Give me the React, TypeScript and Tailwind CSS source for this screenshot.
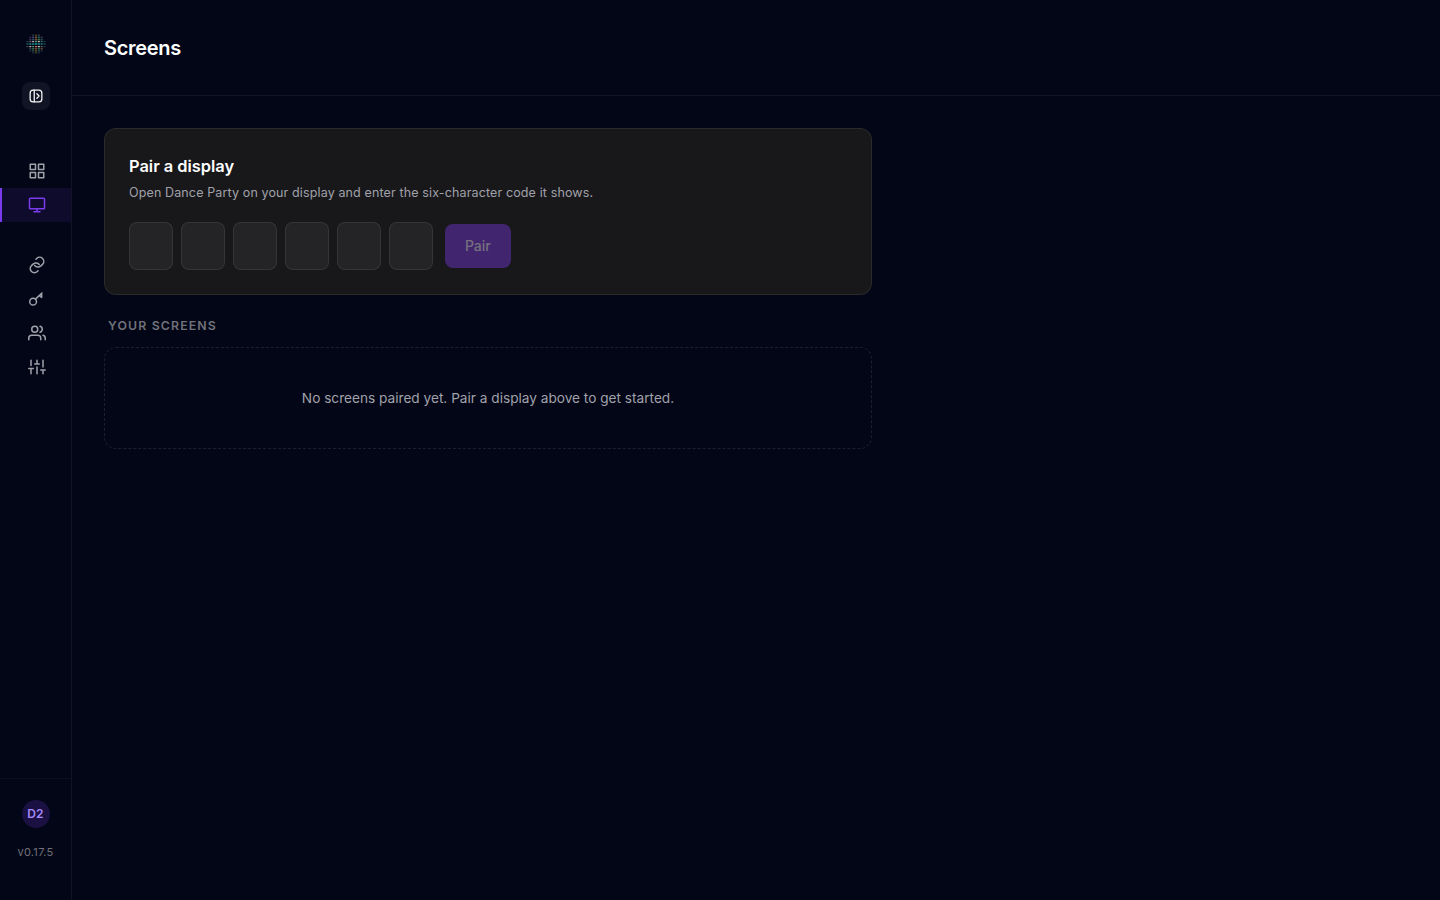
import type { ReactNode } from "react";

const LOGO_ROWS = [
  { y: 0.4, h: 1.6, colors: ["", "", "#20303c", "#4c3c20", "#283c40", "", ""] },
  { y: 2.6, h: 1.6, colors: ["", "#2c2648", "#403c64", "#6a5a2c", "#1d5a50", "#30343c", ""] },
  { y: 4.8, h: 1.6, colors: ["", "#402c54", "#284c68", "#7a4c2c", "#3c6a44", "#28484c", ""] },
  { y: 7, h: 1.2, colors: ["#1e4650", "#5a5a50", "#b0a09c", "#46a090", "#c0b0a4", "#2a6a64", "#1a3a44"] },
  { y: 9, h: 2, colors: ["#12444c", "#146468", "#166878", "#1a7874", "#167078", "#145a5c", "#12343e"] },
  { y: 12, h: 1.2, colors: ["#3a4448", "#b8a8a0", "#50886a", "#c07060", "#d0c4b8", "#6a6048", "#1c3038"] },
  { y: 14, h: 1.6, colors: ["", "#2e4044", "#3a6a48", "#7a4a30", "#286858", "#5a4a38", ""] },
  { y: 16.2, h: 1.4, colors: ["", "#242c3c", "#2c544c", "#6a5a30", "#24505a", "#2a3038", ""] },
  { y: 18.2, h: 1.2, colors: ["", "", "#222c38", "#3c4a2a", "#20343c", "", ""] },
];

function Logo() {
  return (
    <svg width="20" height="20" viewBox="0 0 20 20" aria-hidden="true">
      {LOGO_ROWS.map((row) =>
        row.colors.map((color, i) =>
          color ? <rect key={`${row.y}-${i}`} x={i * 2.85 + 0.3} y={row.y} width="2.3" height={row.h} rx="0.4" fill={color} /> : null,
        ),
      )}
    </svg>
  );
}

function Icon({ children, size = 18, stroke = 2 }: { children: ReactNode; size?: number; stroke?: number }) {
  return (
    <svg width={size} height={size} viewBox="0 0 24 24" fill="none" stroke="currentColor" strokeWidth={stroke} strokeLinecap="round" strokeLinejoin="round" aria-hidden="true">
      {children}
    </svg>
  );
}

function NavItem({ active = false, children }: { active?: boolean; children: ReactNode }) {
  return (
    <a
      className={
        active
          ? "flex h-[34px] items-center justify-center border-l-2 border-[#7c3aed] bg-[#7c3aed]/10 text-[#7c3aed]"
          : "flex h-[34px] items-center justify-center border-l-2 border-transparent text-[#a1a1aa]"
      }
    >
      {children}
    </a>
  );
}

function Sidebar() {
  return (
    <aside className="flex w-[72px] shrink-0 flex-col border-r border-white/[0.06]">
      <div className="flex flex-col items-center pt-[34px]">
        <Logo />
        <button className="mt-7 flex size-7 items-center justify-center rounded-lg bg-white/[0.06] text-[#f4f4f5]">
          <Icon size={14} stroke={2.2}>
            <rect x="2" y="2" width="20" height="20" rx="5" />
            <path d="M9 2v20" />
            <path d="M13.5 8.2l3.8 3.8-3.8 3.8" />
          </Icon>
        </button>
      </div>
      <nav className="mt-11 flex flex-col">
        <NavItem>
          <Icon>
            <rect x="3" y="3" width="7" height="7" />
            <rect x="14" y="3" width="7" height="7" />
            <rect x="14" y="14" width="7" height="7" />
            <rect x="3" y="14" width="7" height="7" />
          </Icon>
        </NavItem>
        <NavItem active>
          <Icon>
            <rect x="2" y="3" width="20" height="14" rx="1" />
            <path d="M8 21h8M12 17v4" />
          </Icon>
        </NavItem>
        <div className="h-[26px]" />
        <NavItem>
          <Icon>
            <path d="M9 12.6a5.5 5.5 0 0 0 7.8.9l2.6-2.4a5.5 5.5 0 0 0-7.8-7.8l-1 1" />
            <path d="M15 11.4a5.5 5.5 0 0 0-7.8-.9l-2.6 2.4a5.5 5.5 0 0 0 7.8 7.8l1-1" />
          </Icon>
        </NavItem>
        <NavItem>
          <Icon>
            <circle cx="6.8" cy="15.5" r="4.5" />
            <path d="M10 12.2L18.6 4M15.2 7.4l3 2.4V4.5" />
          </Icon>
        </NavItem>
        <NavItem>
          <Icon>
            <path d="M17 21v-2a4 4 0 0 0-4-4H5a4 4 0 0 0-4 4v2" />
            <circle cx="9" cy="7" r="4" />
            <path d="M23 21v-2a4 4 0 0 0-3-3.87M16 3.13a4 4 0 0 1 0 7.75" />
          </Icon>
        </NavItem>
        <NavItem>
          <Icon>
            <path d="M4 21v-7M4 10V3M12 21v-9M12 8V3M20 21v-5M20 12V3M1 14h6M9 8h6M17 16h6" />
          </Icon>
        </NavItem>
      </nav>
      <div className="mt-auto flex h-[122px] flex-col items-center border-t border-white/[0.04] pt-[21px]">
        <div className="flex size-7 items-center justify-center rounded-full bg-[#7c3aed]/20 text-xs font-semibold tracking-[0.2px] text-[#a78bfa]">D2</div>
        <span className="mt-4 text-[11px] leading-4 tracking-[0.3px] text-[#71717a]">v0.17.5</span>
      </div>
    </aside>
  );
}

export default function App() {
  return (
    <div className="flex h-screen overflow-hidden bg-[#020617] font-['Inter',sans-serif] text-white">
      <Sidebar />
      <main className="flex min-w-0 flex-1 flex-col">
        <header className="flex h-24 items-center border-b border-white/[0.06] px-8">
          <h1 className="text-xl font-semibold tracking-[-0.3px]">Screens</h1>
        </header>
        <div className="flex w-[832px] flex-col p-8">
          <section className="h-[167px] rounded-xl border border-white/[0.08] bg-[#18181a] px-6 pt-6">
            <h2 className="text-[16.4px] leading-[26px] font-semibold">Pair a display</h2>
            <p className="mt-1 text-[12.5px] leading-5 tracking-[0.13px] text-[#a1a1aa]">Open Dance Party on your display and enter the six-character code it shows.</p>
            <div className="mt-[19px] flex items-center gap-2">
              {[1, 2, 3, 4, 5, 6].map((n) => (
                <input key={n} maxLength={1} aria-label={`Character ${n}`} className="h-12 w-11 rounded-lg border border-white/[0.08] bg-[#242426] text-center" />
              ))}
              <button disabled className="ml-1 h-11 w-[65.5px] rounded-lg bg-[#42256f] text-sm font-medium tracking-[-0.1px] text-[#77717f]">Pair</button>
            </div>
          </section>
          <h3 className="mt-[21px] px-1 text-[12.3px] leading-5 font-semibold tracking-[1.15px] text-[#71717a] uppercase">Your screens</h3>
          <div className="mt-[11px] flex h-[102px] items-center justify-center rounded-xl border border-dashed border-white/10 pt-px text-[13.65px] text-[#a1a1aa]">
            No screens paired yet. Pair a display above to get started.
          </div>
        </div>
      </main>
    </div>
  );
}
